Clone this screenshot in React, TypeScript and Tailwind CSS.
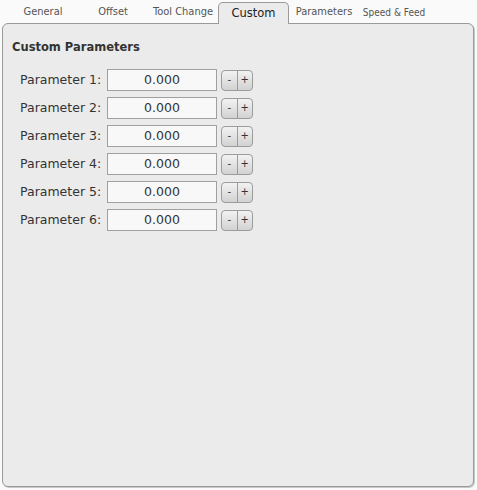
const tabs = ['General', 'Offset', 'Tool Change', 'Custom', 'Parameters', 'Speed & Feed'];
const params = [1, 2, 3, 4, 5, 6];

function Stepper() {
  return (
    <div className="ml-[4px] flex h-[21px] w-[32px] overflow-hidden rounded-[4px] border border-[#9c9c9c] bg-gradient-to-b from-[#f2f2f2] to-[#d2d2d2] text-[10px] leading-none text-[#333]">
      <div className="flex flex-1 items-center justify-center">-</div>
      <div className="w-px bg-[#9c9c9c]" />
      <div className="flex flex-1 items-center justify-center">+</div>
    </div>
  );
}

export default function App() {
  return (
    <div
      className="h-[490px] w-[477px] bg-[#fafafa] px-[2px] pt-[2px] text-[#333]"
      style={{ fontFamily: '"DejaVu Sans", sans-serif' }}
    >
      <div className="flex h-[21px] items-end pl-[6px]">
        {tabs.map(t => {
          const active = t === 'Custom';
          return (
            <div
              key={t}
              className={
                active
                  ? 'relative z-10 -mb-px flex h-[22px] w-[71px] items-center justify-center rounded-t-[5px] border border-b-0 border-[#9a9a9a] bg-[#ebebeb] pt-[1px] text-[11.5px] text-[#222]'
                  : 'flex h-[21px] w-[70px] items-center justify-center pb-[1px] text-[11px] text-[#555]'
              }
              style={{
                fontFamily: active ? '"DejaVu Sans", sans-serif' : '"DejaVu Sans Condensed", "DejaVu Sans", sans-serif',
                fontSize: t === 'Speed & Feed' ? '10px' : undefined,
              }}
            >
              {t}
            </div>
          );
        })}
      </div>
      <div className="h-[464px] w-[472px] rounded-[6px] border border-[#9a9a9a] bg-[#ebebeb] shadow-[1px_1px_0_#c8c8c8]">
        <div className="pl-[9px] pt-[15px] text-[11.5px] font-bold text-[#333]">Custom Parameters</div>
        <div className="mt-[13px] flex flex-col gap-[6px] pl-[17px]">
          {params.map(n => (
            <div key={n} className="flex h-[22px] items-center">
              <span className="w-[87px] text-[12.5px] text-[#333]">Parameter {n}:</span>
              <div className="flex h-[22px] w-[110px] items-center justify-center border border-[#a0a0a0] bg-[#f8f8f8] text-[12.5px] text-[#333]">
                0.000
              </div>
              <Stepper />
            </div>
          ))}
        </div>
      </div>
    </div>
  );
}
